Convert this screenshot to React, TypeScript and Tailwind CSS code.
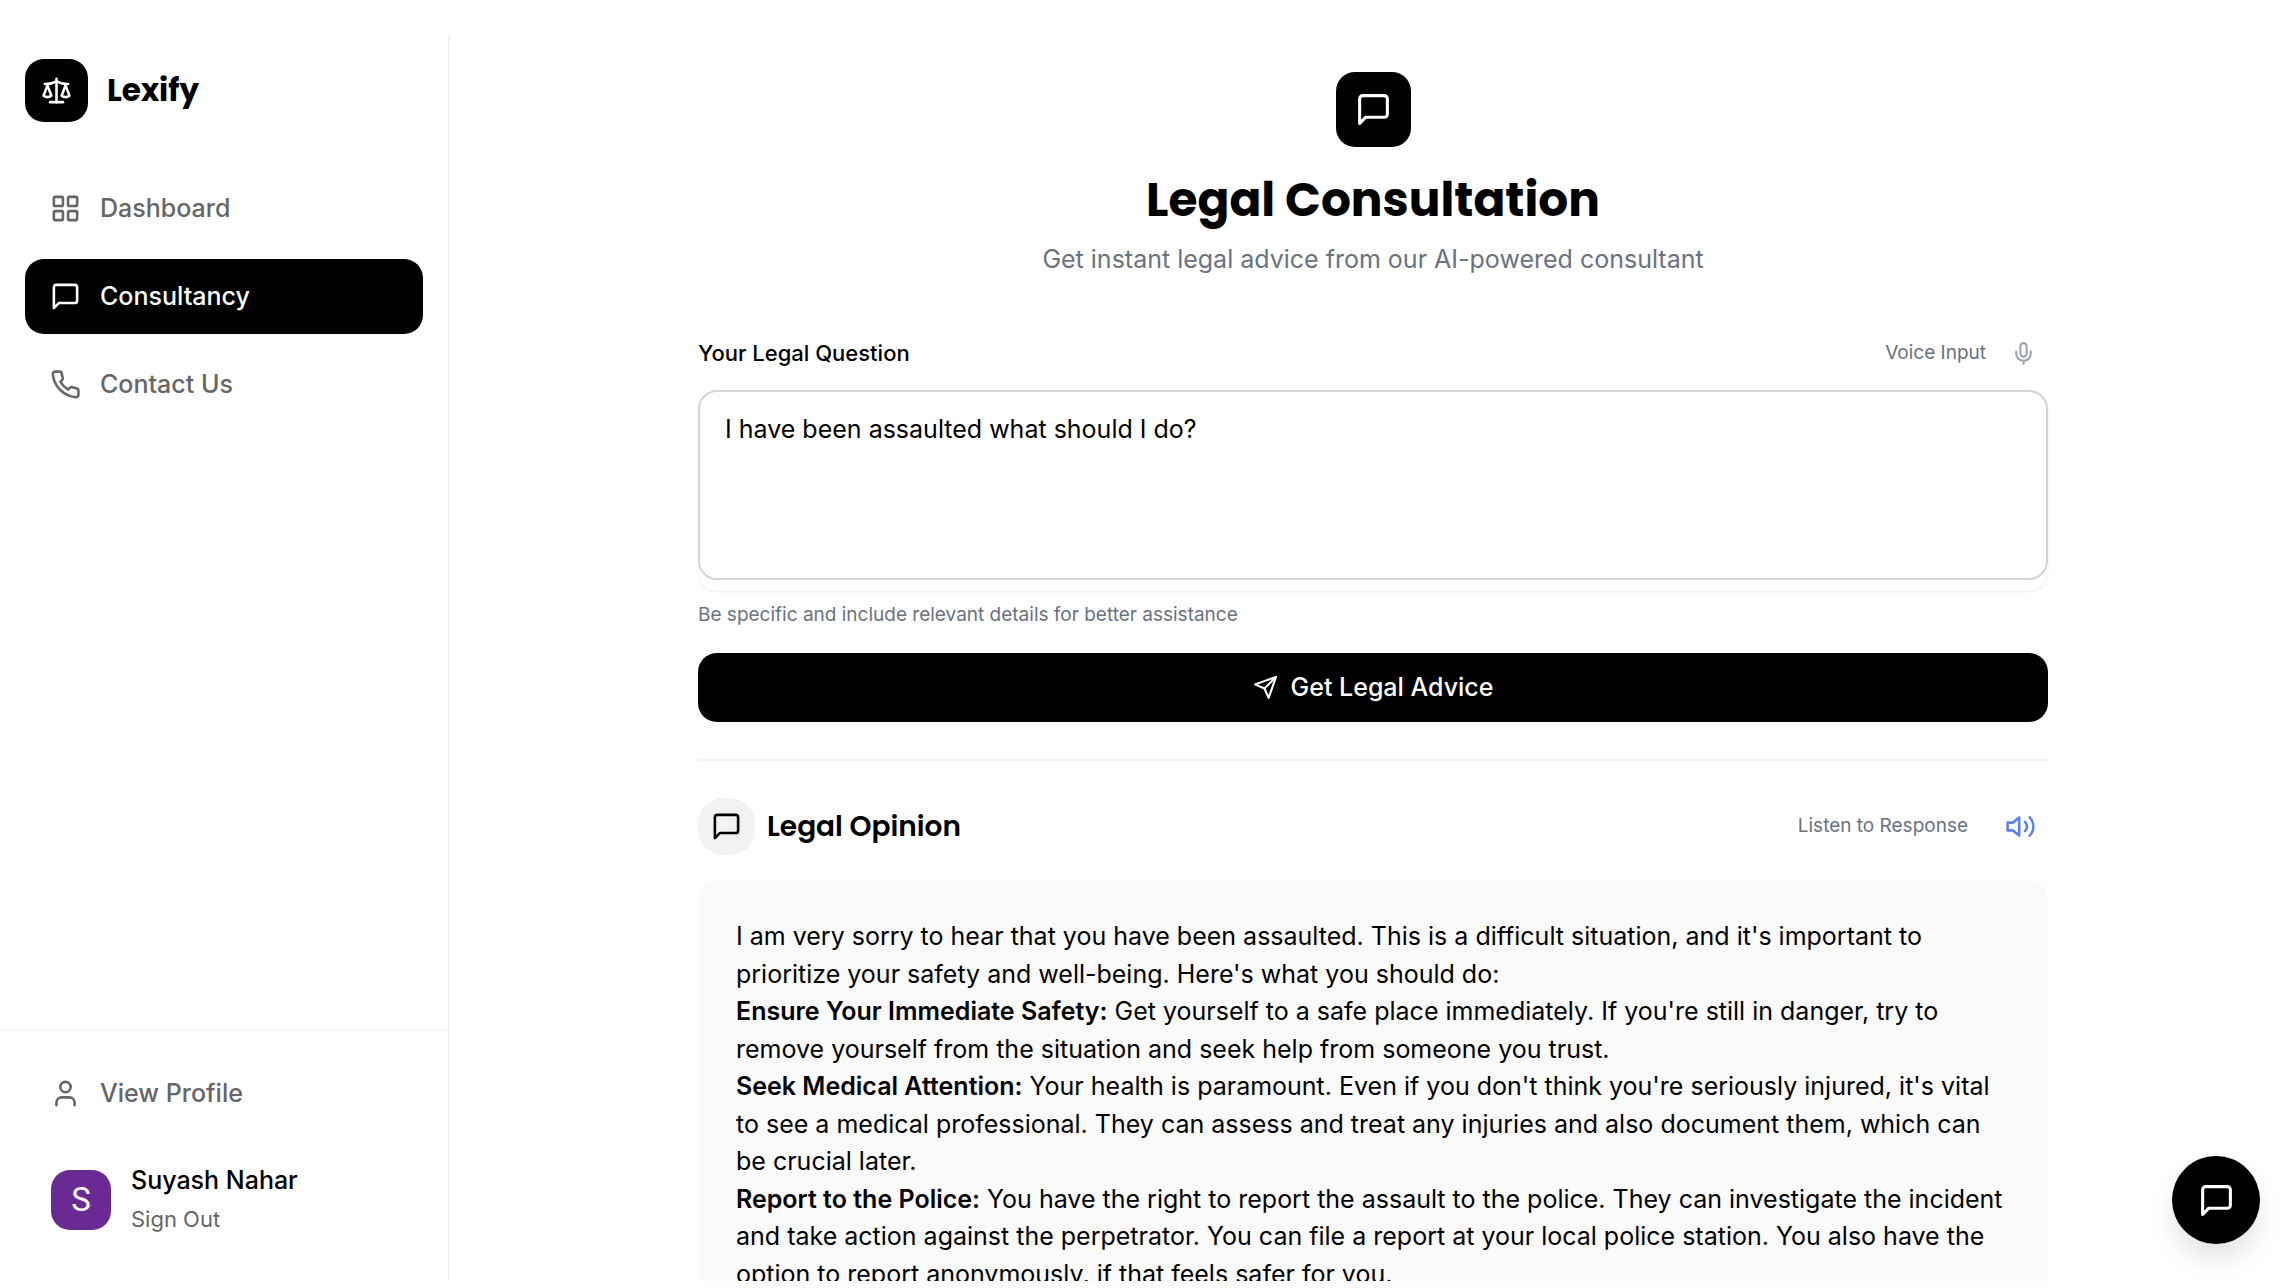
import { LayoutGrid, Mic, Scale, User } from "lucide-react";
import { FiMessageSquare, FiPhone, FiSend, FiVolume2 } from "react-icons/fi";

const navItems = [
  { label: "Dashboard", Icon: LayoutGrid, active: false },
  { label: "Consultancy", Icon: FiMessageSquare, active: true },
  { label: "Contact Us", Icon: FiPhone, active: false },
];

const opinion = [
  {
    title: "Ensure Your Immediate Safety:",
    text: "Get yourself to a safe place immediately. If you're still in danger, try to remove yourself from the situation and seek help from someone you trust.",
  },
  {
    title: "Seek Medical Attention:",
    text: "Your health is paramount. Even if you don't think you're seriously injured, it's vital to see a medical professional. They can assess and treat any injuries and also document them, which can be crucial later.",
  },
  {
    title: "Report to the Police:",
    text: "You have the right to report the assault to the police. They can investigate the incident and take action against the perpetrator. You can file a report at your local police station. You also have the option to report anonymously, if that feels safer for you.",
  },
];

function Sidebar() {
  return (
    <aside className="flex w-[450px] shrink-0 flex-col border-r-2 border-[#f3f3f3]">
      <a href="#" className="flex items-center gap-[19px] p-[25px]">
        <span className="flex size-[63px] items-center justify-center rounded-[19px] bg-black text-white">
          <Scale size={31} />
        </span>
        <span className="font-[Poppins,Inter,sans-serif] text-[31px] font-bold leading-normal">Lexify</span>
      </a>
      <nav className="flex flex-1 flex-col gap-[13px] px-[25px] pt-6">
        {navItems.map(({ label, Icon, active }) => (
          <a
            key={label}
            href="#"
            className={
              active
                ? "flex h-[75px] items-center gap-[19px] rounded-[19px] bg-black px-[25px] font-medium text-white"
                : "flex h-[75px] items-center gap-[19px] rounded-[19px] px-[25px] font-medium text-[#666666]"
            }
          >
            <Icon size={31} />
            {label}
          </a>
        ))}
      </nav>
      <div className="flex flex-col gap-[13px] border-t-2 border-[#f3f3f3] p-[25px]">
        <a href="#" className="flex h-[75px] items-center gap-[19px] px-[25px] font-medium text-[#666666]">
          <User size={31} />
          View Profile
        </a>
        <div className="flex h-[112px] items-center gap-5 px-[26px]">
          <span className="flex size-[60px] items-center justify-center rounded-[19px] bg-[#6a2a94] font-[Roboto] text-[33px] text-white">
            S
          </span>
          <div className="flex flex-col items-start">
            <span className="font-medium">Suyash Nahar</span>
            <button type="button" className="text-[22px] leading-[38px] text-[#666666]">
              Sign Out
            </button>
          </div>
        </div>
      </div>
    </aside>
  );
}

function QuestionForm() {
  return (
    <form className="flex flex-col">
      <div className="mb-3 flex items-center justify-between">
        <label htmlFor="question" className="text-[22px] font-medium">
          Your Legal Question
        </label>
        <div className="flex items-center gap-[13px]">
          <span className="text-[19px] text-[#6b7280]">Voice Input</span>
          <button type="button" aria-label="Voice input" className="p-[12px] text-[#9ca3af]">
            <Mic size={25} />
          </button>
        </div>
      </div>
      <div className="rounded-[19px] pb-[11px] shadow-[0_1px_2px_rgba(0,0,0,0.08)]">
        <textarea
          id="question"
          className="block h-[190px] w-full resize-none rounded-[19px] border-2 border-[#d4d4d4] px-[25px] py-[19px] outline-none"
          defaultValue="I have been assaulted what should I do?"
        />
      </div>
      <p className="mt-[10px] text-[19px] text-[#6b7280]">
        Be specific and include relevant details for better assistance
      </p>
      <button
        type="submit"
        className="mt-6 flex h-[69px] items-center justify-center gap-[13px] rounded-[19px] bg-black font-medium text-white"
      >
        <FiSend size={25} />
        Get Legal Advice
      </button>
    </form>
  );
}

function Opinion() {
  return (
    <section className="mt-[37px] border-t-2 border-[#f3f3f3] pt-[37px]">
      <div className="flex items-center justify-between">
        <div className="flex items-center gap-3">
          <span className="flex size-[57px] items-center justify-center rounded-[25px] bg-[#f2f2f2]">
            <FiMessageSquare size={31} />
          </span>
          <h2 className="font-[Poppins,Inter,sans-serif] text-[28px] font-semibold leading-normal">Legal Opinion</h2>
        </div>
        <div className="flex items-center gap-[25px]">
          <span className="text-[19px] text-[#6b7280]">Listen to Response</span>
          <button type="button" aria-label="Listen to response" className="p-[12px] text-[#5a84ec]">
            <FiVolume2 size={31} />
          </button>
        </div>
      </div>
      <article className="mt-[25px] rounded-[19px] bg-[#fafafa] p-[38px]">
        <p>
          I am very sorry to hear that you have been assaulted. This is a difficult situation, and it's important to
          prioritize your safety and well-being. Here's what you should do:
        </p>
        {opinion.map(({ title, text }) => (
          <p key={title}>
            <strong className="font-semibold">{title}</strong> {text}
          </p>
        ))}
      </article>
    </section>
  );
}

export default function App() {
  return (
    <div className="flex h-screen bg-white pb-[7px] pt-[34px] font-[Inter,sans-serif] text-[25px] leading-normal text-black">
      <Sidebar />
      <main className="min-w-0 flex-1 overflow-hidden pl-1 pt-[38px]">
        <div className="mx-auto max-w-[1350px]">
          <header className="mb-[50px] flex flex-col items-center text-center">
            <span className="flex size-[75px] items-center justify-center rounded-[19px] bg-black text-white">
              <FiMessageSquare size={37} />
            </span>
            <h1 className="mt-[25px] font-[Poppins,Inter,sans-serif] text-[47px] font-bold leading-[56px]">
              Legal Consultation
            </h1>
            <p className="mt-[13px] text-[#6b7280]">Get instant legal advice from our AI-powered consultant</p>
          </header>
          <QuestionForm />
          <Opinion />
        </div>
      </main>
      <button
        type="button"
        aria-label="Open chat"
        className="fixed bottom-[44px] right-[32px] flex size-[88px] items-center justify-center rounded-full bg-black text-white shadow-[0_16px_24px_rgba(0,0,0,0.1)]"
      >
        <FiMessageSquare size={37} />
      </button>
    </div>
  );
}
